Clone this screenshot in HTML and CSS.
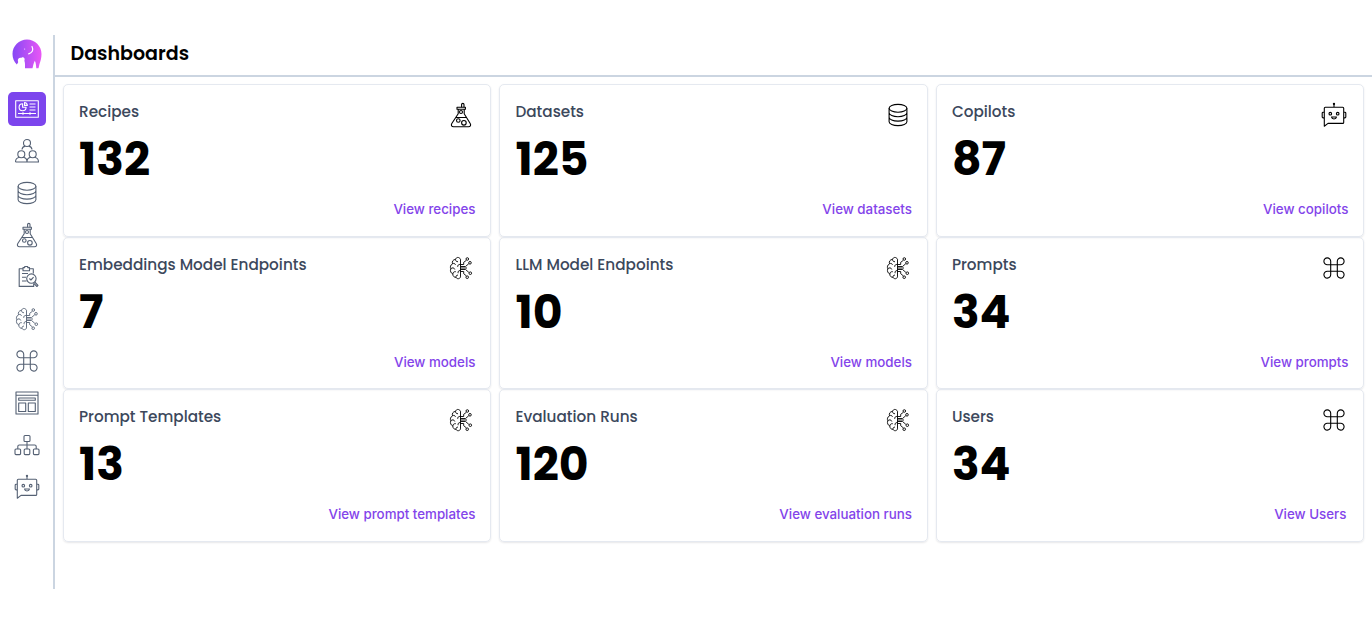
FILE: index.html
```html
<!DOCTYPE html>
<html lang="en">
<head>
<meta charset="utf-8">
<title>Dashboards</title>
<link rel="stylesheet" href="styles.css">
</head>
<body>
<svg class="sprite" aria-hidden="true">
  <defs>
    <linearGradient id="brand" x1="0" y1="0" x2="1" y2="0"><stop offset="0" stop-color="#8648f5"/><stop offset="1" stop-color="#e957f5"/></linearGradient>
    <symbol id="board" viewBox="0 0 26 26">
      <rect x="1.700" y="4.700" width="22.600" height="16.600"/>
      <path d="M8.600 7.800a3.500 3.500 0 1 0 3.500 3.500H8.600zM10.500 6.500a3.300 3.300 0 0 1 2.900 2.900h-2.900zM15.500 8h6M15.500 11h6M15.500 14h6M4 17.500h18M9 16.300v2.400M16 16.300v2.400"/>
    </symbol>
    <symbol id="people" viewBox="0 0 26 26">
      <circle cx="13" cy="5" r="3.500"/><path d="M8 11.500c.2-2 1.500-3 3.200-3.400M18 11.500c-.2-2-1.500-3-3.200-3.400"/>
      <circle cx="7.300" cy="16.200" r="3.500"/><circle cx="18.700" cy="16.200" r="3.500"/>
      <path d="M1.500 24c0-3 1.800-4.300 4-4.700M9.100 19.300c2.200.3 3.900 1.700 3.900 4.700M1.500 24h23c0-3-1.800-4.300-4-4.700M16.900 19.300c-2.200.3-3.900 1.700-3.900 4.700"/>
    </symbol>
    <symbol id="database" viewBox="0 0 26 26">
      <ellipse cx="13" cy="6.300" rx="8.900" ry="3.900"/>
      <path d="M4.100 6.300v13.400c0 2.100 4 3.900 8.900 3.900s8.900-1.800 8.900-3.900V6.300M4.100 10.800c0 2.100 4 3.900 8.900 3.900s8.900-1.800 8.900-3.900M4.100 15.200c0 2.100 4 3.900 8.900 3.900s8.900-1.800 8.900-3.900"/>
    </symbol>
    <symbol id="flask" viewBox="0 0 26 26">
      <path d="M9 5.200h8.400v2H9zM10.200 7.200v4.600L3.800 21.500c-1 1.700-.2 3.200 1.700 3.200h15c1.900 0 2.700-1.500 1.700-3.200L16.200 11.800V7.200M7.800 15.500h10.600"/>
      <path d="M13.600 5.200V2.600c0-1.600 2.400-1.600 2.400 0v2.600"/><circle cx="13" cy="10" r="1.500"/><circle cx="10.300" cy="18.500" r="1.800"/><circle cx="15.900" cy="20.800" r="2.300"/>
    </symbol>
    <symbol id="report" viewBox="0 0 26 26">
      <path d="M9 4.800H5.200v17.600h14.500v-2.500M15.500 4.800h3.800v4.700M9 6.800V3.600h1.700V2.500h3v1.100h1.800v3.200zM8 9.500h6M8 13.300h4M8 17h4.500"/>
      <circle cx="17.400" cy="14.600" r="4.700"/><path d="M15.400 14.500l1.500 1.500 2.700-2.800M20.700 18l3.300 3.400-1.100 1.100-3.300-3.400"/>
    </symbol>
    <symbol id="brain" viewBox="0 0 26 26">
      <path d="M12.500 4.200C11 1.600 8.200 2 7.500 4.400 5 4.500 3.800 6.600 4.500 8.800 2.300 10 2 12.200 2.800 13.800 1.800 16 3 18.300 4.800 19c0 2.400 1.600 3.400 3.100 3.300 1.200 2.100 4 1.800 4.600-.4zM7.500 4.400c.2 1.800 1 2.400 2.500 2.300M4.500 8.800c1.200-.8 2.500-.4 3 1M12.500 9.500c-2-.4-3 .9-2.800 2.300M2.800 13.800c1.300-1.500 3.500-1.200 4 .7M4.800 19c.2-1.700 1.300-2.600 3-2.300M12.500 15.500c-2.200 0-2.800 1.300-2.300 2.700M8 22.300c-.1-1.500.6-2.200 2-2.200"/>
      <path d="M12.500 9.500h3.200V7.300l2.700-2M12.500 11.500h5l3.300-2.800M12.500 13h6.500M12.500 14.500h5l3.300 2.800M12.500 16.500h3.200v2.200l2.700 2.200"/>
      <circle cx="19.300" cy="4" r="1.300"/><circle cx="22" cy="7.800" r="1.300"/><circle cx="22.300" cy="18.200" r="1.300"/><circle cx="19.200" cy="22.200" r="1.300"/>
    </symbol>
    <symbol id="command" viewBox="0 0 26 26">
      <path d="M9.700 9.700H6.500a3.400 3.400 0 1 1 3.200-3.400v13.400a3.400 3.400 0 1 1-3.200-3.400h13a3.400 3.400 0 1 1-3.200 3.400V6.300a3.400 3.400 0 1 1 3.200 3.400z"/>
    </symbol>
    <symbol id="layout" viewBox="0 0 26 26">
      <path d="M2 2h22v22H2zM2 5.200h22M4.700 8h16.600v2.200H4.700zM4.700 13h7v8.500h-7zM14.300 13h7v8.500h-7z"/>
    </symbol>
    <symbol id="tree" viewBox="0 0 26 26">
      <rect x="10" y="3.500" width="6" height="6" rx="1"/><rect x="1" y="17" width="5.600" height="5.600" rx="1"/><rect x="10.200" y="17" width="5.600" height="5.600" rx="1"/><rect x="19.400" y="17" width="5.600" height="5.600" rx="1"/>
      <path d="M13 9.500V17M3.800 17v-2.500c0-1 .5-1.500 1.500-1.500h15.400c1 0 1.500.5 1.500 1.500V17"/>
    </symbol>
    <symbol id="bot" viewBox="0 0 26 26">
      <path d="M3.300 24.200V6.200c0-.7.3-1 1-1h17.400c.7 0 1 .3 1 1v14.200c0 .7-.3 1-1 1H7zM13 5V2M3.300 10.200H2.100c-.6 0-.9.3-.9.9V15c0 .6.3.9.9.9h1.200M22.700 10.200h1.200c.6 0 .9.3.9.9V15c0 .6-.3.9-.9.9h-1.200"/>
      <circle cx="13" cy="1.900" r=".6"/><circle cx="9.300" cy="11.700" r="1.300"/><circle cx="16.700" cy="11.700" r="1.300"/><path d="M10.500 15h5c-.4 2.600-4.600 2.600-5 0z"/>
    </symbol>
  </defs>
</svg>
<div class="app">
  <nav class="sidebar">
    <svg class="logo" viewBox="0 0 30 30"><path fill="url(#brand)" d="M4.800 25.500C2 22.800.5 19 .5 15 .5 7 7 .5 15 .5S29.500 7 29.500 15c0 4-1 7-2 10l-1 4.300h-2.200c-.3-2.500-.2-5.200-1.500-7.500-1.300 2.500-1.700 5.200-2.300 7.500H13c0-2.500.3-4.500-.6-7.500 1-2.500-1-4.300-2.900-3-2.500-.5-4 .8-3.600 3.200 1 1.500-.7 2.500-1.100 3.500z"/><path d="M20 7.500c1.700 3.500.5 6.200-3.300 7.300" fill="none" stroke="#fff" stroke-width="1.200" stroke-linecap="round"/><circle cx="12.700" cy="10" r=".5" fill="#fff"/></svg>
    <a class="nav-item active"><svg class="icon"><use href="#board"/></svg></a>
    <a class="nav-item"><svg class="icon"><use href="#people"/></svg></a>
    <a class="nav-item"><svg class="icon"><use href="#database"/></svg></a>
    <a class="nav-item"><svg class="icon"><use href="#flask"/></svg></a>
    <a class="nav-item"><svg class="icon"><use href="#report"/></svg></a>
    <a class="nav-item"><svg class="icon fine"><use href="#brain"/></svg></a>
    <a class="nav-item"><svg class="icon"><use href="#command"/></svg></a>
    <a class="nav-item"><svg class="icon"><use href="#layout"/></svg></a>
    <a class="nav-item"><svg class="icon"><use href="#tree"/></svg></a>
    <a class="nav-item"><svg class="icon"><use href="#bot"/></svg></a>
  </nav>
  <main class="content">
    <header class="header"><h1>Dashboards</h1></header>
    <section class="grid">
      <article class="card"><div class="top"><h2>Recipes</h2><svg class="icon"><use href="#flask"/></svg></div><p class="count">132</p><a class="link">View recipes</a></article>
      <article class="card"><div class="top"><h2>Datasets</h2><svg class="icon"><use href="#database"/></svg></div><p class="count">125</p><a class="link">View datasets</a></article>
      <article class="card"><div class="top"><h2>Copilots</h2><svg class="icon"><use href="#bot"/></svg></div><p class="count">87</p><a class="link">View copilots</a></article>
      <article class="card"><div class="top"><h2>Embeddings Model Endpoints</h2><svg class="icon fine"><use href="#brain"/></svg></div><p class="count">7</p><a class="link">View models</a></article>
      <article class="card"><div class="top"><h2>LLM Model Endpoints</h2><svg class="icon fine"><use href="#brain"/></svg></div><p class="count">10</p><a class="link">View models</a></article>
      <article class="card"><div class="top"><h2>Prompts</h2><svg class="icon"><use href="#command"/></svg></div><p class="count">34</p><a class="link">View prompts</a></article>
      <article class="card"><div class="top"><h2>Prompt Templates</h2><svg class="icon fine"><use href="#brain"/></svg></div><p class="count">13</p><a class="link">View prompt templates</a></article>
      <article class="card"><div class="top"><h2>Evaluation Runs</h2><svg class="icon fine"><use href="#brain"/></svg></div><p class="count">120</p><a class="link">View evaluation runs</a></article>
      <article class="card"><div class="top"><h2>Users</h2><svg class="icon"><use href="#command"/></svg></div><p class="count">34</p><a class="link users">View Users</a></article>
    </section>
  </main>
</div>
</body>
</html>
```
FILE: styles.css
```css
* { box-sizing: border-box; }
body { margin: 0; padding-top: 35px; height: 624px; overflow: hidden; background: #fff; font-family: Poppins, Inter, sans-serif; color: #000; }
h1, h2, p { margin: 0; }
.sprite { position: absolute; width: 0; height: 0; }
.app { display: flex; height: 554px; }
.sidebar { width: 55px; flex: none; border-right: 2px solid #cbd5e1; padding: 4px 0 0 7.6px; display: flex; flex-direction: column; gap: 8px; }
.logo { width: 30px; height: 30px; margin: 0 0 15px 4px; flex: none; }
.nav-item { width: 38px; height: 34px; flex: none; display: flex; align-items: center; justify-content: center; border-radius: 5px; color: #556174; }
.active { background: #7c45ed; color: #fff; }
.icon { width: 26px; height: 26px; flex: none; fill: none; stroke: currentColor; stroke-width: 1.1; stroke-linejoin: round; }
.fine { stroke-width: .9; }
.content { flex: 1; }
.header { height: 42px; border-bottom: 2px solid #cbd5e1; padding: 4px 0 0 15.5px; }
h1 { font-size: 19.06px; line-height: 30px; font-weight: 600; }
.grid { display: grid; grid-template-columns: repeat(3, 1fr); grid-auto-rows: 152.5px; column-gap: 8px; padding: 7.4px 7.6px 0 8px; }
.card { height: 152.5px; border: 1px solid #e5e9f0; border-radius: 5px; box-shadow: 0 1px 2px #0f172a1a; padding: 15px; display: flex; flex-direction: column; }
.top { display: flex; justify-content: space-between; height: 29px; padding-right: 1px; }
h2 { font-size: 15.25px; line-height: 23px; font-weight: 500; color: #3c485c; }
.top .icon { margin-top: 1.7px; }
.count { font-size: 45.75px; line-height: 60px; font-weight: 700; }
.link { margin-top: auto; margin-bottom: 1.5px; align-self: flex-end; font: 550 13.34px/20px Inter, sans-serif; color: #8344ea; }
.users { margin-right: 2px; }
```
